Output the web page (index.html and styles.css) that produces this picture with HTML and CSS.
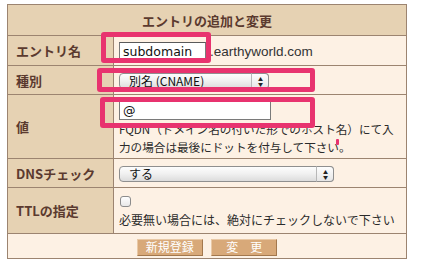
FILE: index.html
```html
<!DOCTYPE html>
<html lang="ja">
<head>
  <meta charset="UTF-8">
  <title>エントリの追加と変更</title>
<link rel="stylesheet" href="styles.css">
</head>
<body>
  <div class="wrap">
    <table class="entry">
      <tr>
        <th colspan="2" class="head">エントリの追加と変更</th>
      </tr>
      <tr class="r1">
        <th>エントリ名</th>
        <td><input type="text" class="txt name" value="subdomain"><span class="domain">.earthyworld.com</span></td>
      </tr>
      <tr class="r2">
        <th>種別</th>
        <td><span class="sel small"><select><option>別名 (CNAME)</option></select></span></td>
      </tr>
      <tr class="r3">
        <th>値</th>
        <td>
          <input type="text" class="txt val" value="@">
          <p class="note fqdn">FQDN（ドメイン名の付いた形でのホスト名）にて入力の場合は最後にドットを付与して下さい。</p>
        </td>
      </tr>
      <tr class="r4">
        <th>DNSチェック</th>
        <td><span class="sel wide"><select><option>する</option></select></span></td>
      </tr>
      <tr class="r5">
        <th>TTLの指定</th>
        <td>
          <input type="checkbox" class="chk">
          <p class="note">必要無い場合には、絶対にチェックしないで下さい</p>
        </td>
      </tr>
      <tr class="btnrow">
        <td colspan="2">
          <input type="button" class="btn" value="新規登録">
          <input type="button" class="btn" value="変　更">
        </td>
      </tr>
    </table>

    <!-- 注釈の枠 -->
    <div class="mark m1"></div>
    <div class="mark m2"></div>
    <div class="mark m3"></div>
    <div class="dot"></div>
  </div>
</body>
</html>
```
FILE: styles.css
```css
*{margin:0;padding:0;}
body{
  background:#fff;
  font-family:"Noto Sans CJK JP","DejaVu Sans",sans-serif;
  color:#222;
}
.wrap{
  position:relative;
  padding:4px 0 0 7px;
}
.entry{
  width:400px;
  border-collapse:collapse;
  border:1px solid #9c8470;
}
.entry th,.entry td{
  border:1px solid #9c8470;
  font-size:12px;
}
.entry th{
  background:#e6d2b3;
  color:#5b3a2f;
  text-align:left;
  padding-left:8px;
  width:97px;
  font-size:13px;
}
.entry td{
  background:#fdf1e4;
  padding:0 5px;
}
.entry th.head{
  text-align:center;
  padding:0;
  height:30px;
  font-size:13px;
}
.r1 th,.r1 td{height:29px;}
.r2 th,.r2 td{height:28px;}
.r3 th,.r3 td{height:63px;}
.r4 th,.r4 td{height:28px;}
.r5 th,.r5 td{height:45px;}
.btnrow td{
  height:24px;
  background:#fdf1e4;
  text-align:center;
  padding:0;
}

.txt{
  border:1px solid #7a7a7a;
  border-top-color:#5a5a5a;
  background:#fff;
  font-family:"DejaVu Sans",sans-serif;
  font-size:12.5px;
  color:#111;
  padding:0 3px;
  outline:none;
  vertical-align:middle;
}
.name{width:79px;height:17px;}
.val{width:144px;height:18px;display:block;margin-top:3px;}
.domain{
  font-family:"Liberation Sans",sans-serif;
  font-size:13.5px;
  color:#333;
  vertical-align:middle;
  margin-left:4px;
}
.note{
  font-size:12px;
  line-height:18px;
  color:#2a2a2a;
}
.note.fqdn{font-size:11.6px;}

.sel{
  position:relative;
  display:inline-block;
  vertical-align:middle;
}
.sel select{
  appearance:none;
  -webkit-appearance:none;
  width:100%;
  height:16px;
  border:1px solid #8f8f8f;
  border-radius:4px;
  background:linear-gradient(#fdfdfd,#f0f0f0 50%,#dcdcdc);
  font-family:"Noto Sans CJK JP",sans-serif;
  font-size:12px;
  line-height:14px;
  padding:0 0 0 9px;
  color:#111;
  outline:none;
  display:block;
}
.sel.small{width:150px;}
.sel.wide{width:215px;}
.sel::after{
  content:"";
  position:absolute;
  right:0;top:0;
  width:18px;height:16px;
  border-left:1px solid #b8b8b8;
  border-radius:0 4px 4px 0;
  background:linear-gradient(#fefefe,#e6e6e6);
  box-sizing:border-box;
  border-right:1px solid #8f8f8f;
  border-top:1px solid #8f8f8f;
  border-bottom:1px solid #8f8f8f;
}
.sel::before{
  content:"▲\A▼";
  white-space:pre;
  position:absolute;
  right:6px;top:3px;
  z-index:2;
  font-size:5px;
  line-height:5px;
  color:#222;
}

.chk{
  appearance:none;
  -webkit-appearance:none;
  width:11px;height:11px;
  border:1px solid #8c8c8c;
  border-radius:3px;
  background:linear-gradient(#fff,#e8e8e8);
  display:block;
  margin:4px 0 4px 1px;
}

.btn{
  width:66px;
  height:17px;
  background:#d8a979;
  color:#fff;
  font-family:"Noto Sans CJK JP",sans-serif;
  font-size:12px;
  line-height:14px;
  border:1px solid #a3784d;
  border-top-color:#e9c9a6;
  border-left-color:#e9c9a6;
  margin:0 3px;
  vertical-align:middle;
}

.mark{
  position:absolute;
  border:5px solid #e8336f;
  border-radius:3px;
}
.m1{left:101px;top:32px;width:100px;height:21px;}
.m2{left:97px;top:68px;width:208px;height:14px;}
.m3{left:100px;top:97px;width:205px;height:21px;}
.dot{
  position:absolute;
  left:336px;top:139px;
  width:3px;height:6px;
  background:#e8336f;
  border-radius:1px;
}
```
